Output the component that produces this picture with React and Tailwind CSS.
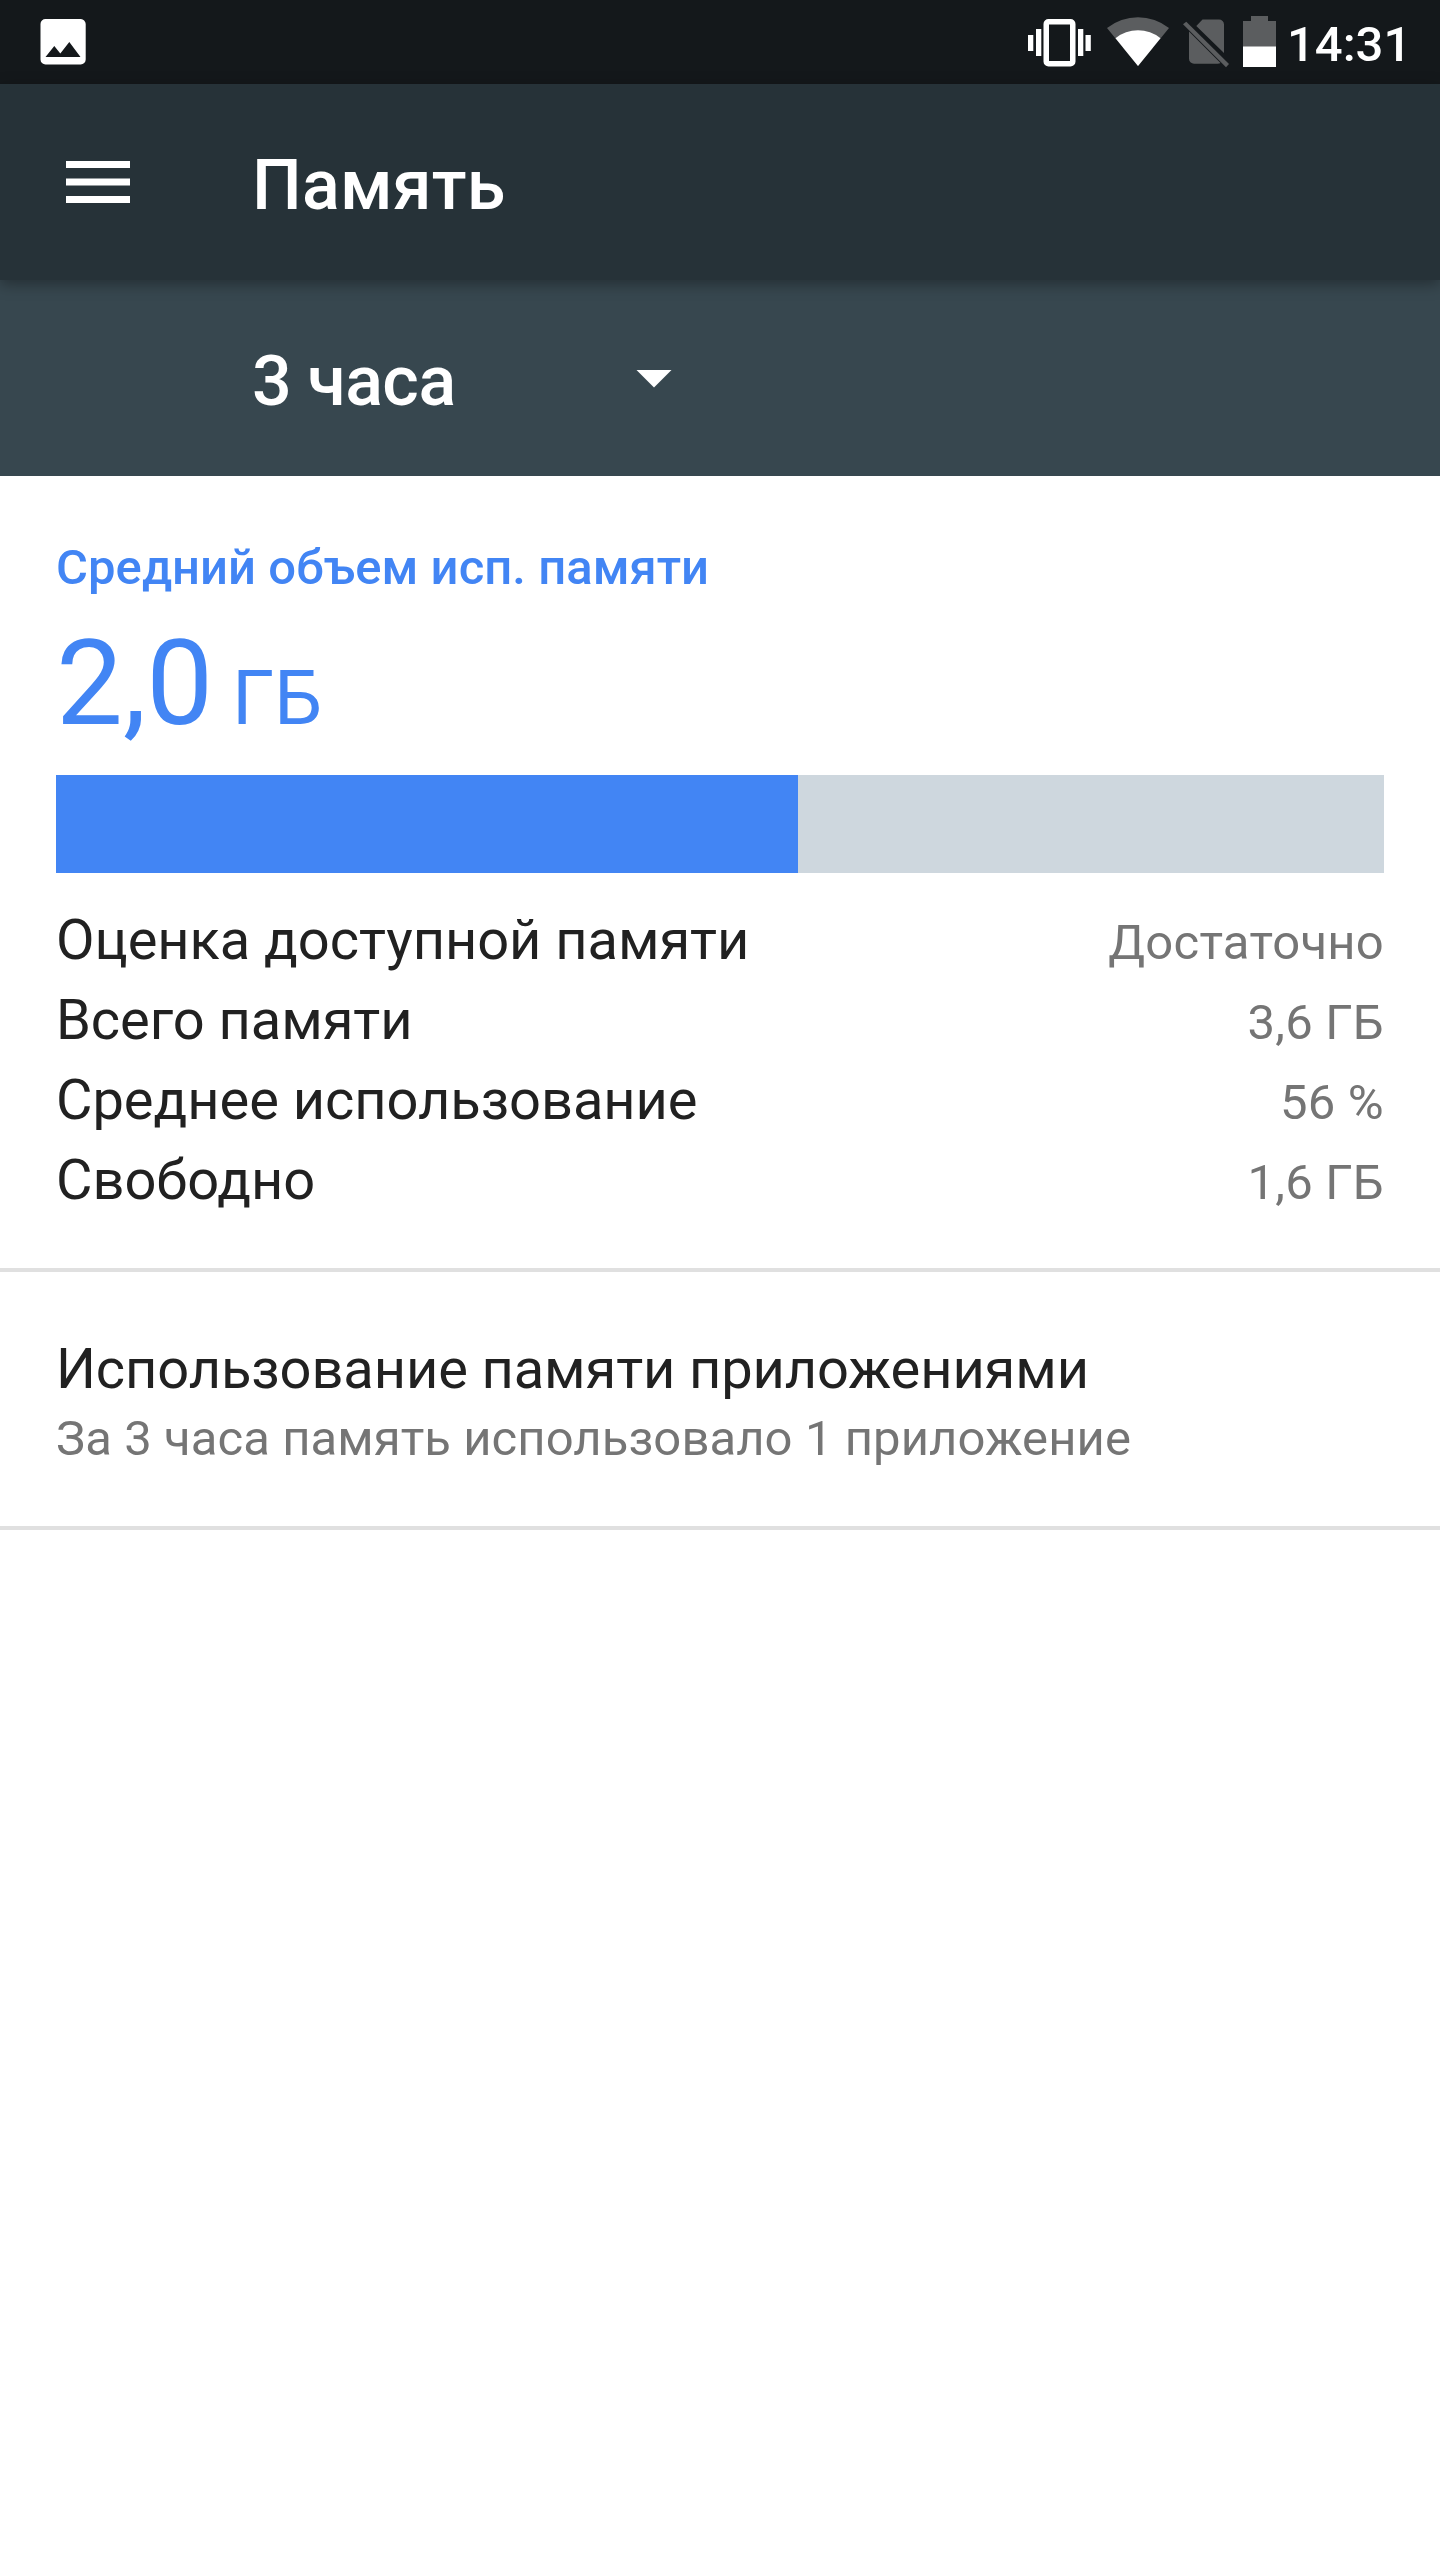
const stats = [
  ["Оценка доступной памяти", "Достаточно"],
  ["Всего памяти", "3,6 ГБ"],
  ["Среднее использование", "56 %"],
  ["Свободно", "1,6 ГБ"],
];

function StatusBar() {
  return (
    <div className="flex h-[84px] items-center bg-[#14181b] pl-10 text-white">
      <svg className="h-[46px] w-[46px]" viewBox="0 0 46 46" fill="currentColor">
        <path fillRule="evenodd" d="M5.5 0h35A5 5 0 0 1 45.7 5v35.500a5 5 0 0 1-5 5H5.500a5 5 0 0 1-5-5V5a5 5 0 0 1 5-5zM5.500 38h35L29.300 23l-9 11.500L14.300 27z" />
      </svg>
      <div className="ml-auto flex w-[412px] items-center">
        <svg className="h-[50px] w-[64px]" viewBox="1028 17 64 50" fill="currentColor">
          <path d="M1028 35h5.300v16h-5.300zM1036 29h5.300v27h-5.300zM1078 29h5.300v27h-5.300zM1085.500 35h5.300v16h-5.300z" />
          <path fillRule="evenodd" d="M1048.500 19h22a5 5 0 0 1 5 5v37.500a5 5 0 0 1-5 5h-22a5 5 0 0 1-5-5V24a5 5 0 0 1 5-5zM1049 24.500v36.500h21V24.500z" />
        </svg>
        <svg className="ml-[15px] h-[50px] w-[62px]" viewBox="1107 17 62 50" fill="currentColor">
          <path fill="#5b5d5f" d="M1138 66L1107 28a50 50 0 0 1 62 0z" />
          <path d="M1138 66L1115.500 38.200a36 36 0 0 1 45 0z" />
        </svg>
        <svg className="ml-[13px] mt-[2px] h-[52px] w-[48px]" viewBox="1182 17 48 52" fill="#5b5d5f">
          <path d="M1196.300 26l6.200-6.500h16.500a5 5 0 0 1 5 5v28.500zM1189 31.500l31.500 31.500q-1 .8-3 .8h-23.500a5 5 0 0 1-5-5z" />
          <path d="M1186.300 21.700l42.700 42.300-3 3.300-43-43z" />
        </svg>
        <svg className="-mt-px ml-[13px] h-[51px] w-[33px]" viewBox="0 0 33 51" fill="currentColor">
          <path fill="#5b5d5f" d="M8 0h17v5h8v26H0V5h8z" />
          <path d="M0 30.500h33V51H0z" />
        </svg>
        <span className="ml-[11px] mt-1 text-[49px] font-medium leading-none">14:31</span>
      </div>
    </div>
  );
}

export default function App() {
  return (
    <div className="flex h-[2560px] w-[1440px] flex-col bg-white font-['Roboto',sans-serif] text-[#212121]">
      <StatusBar />
      <header className="relative flex h-[196px] items-center bg-[#263238] text-white shadow-[0_4px_14px_rgba(0,0,0,0.35)]">
        <svg className="ml-[66px] h-[42px] w-16" viewBox="0 0 64 42" fill="currentColor">
          <path d="M0 0h64v7H0zM0 17.500h64v7H0zM0 35h64v7H0z" />
        </svg>
        <h1 className="ml-[122px] mt-[6px] text-[70px] font-medium leading-none tracking-[0.25px]">Память</h1>
      </header>
      <div className="flex h-[196px] items-center bg-[#37474f] pl-[252px] text-white">
        <span className="mt-[6px] w-[384px] text-[70px] font-medium leading-none tracking-[-0.5px] [word-spacing:-1px]">3 часа</span>
        <svg className="mt-[2px] h-[18px] w-9" viewBox="0 0 36 18" fill="currentColor">
          <path d="M0.500 0h35L18 17.500z" />
        </svg>
      </div>
      <main className="flex flex-col">
        <section className="flex flex-col border-b-4 border-[#e0e0e0] px-14 pb-12 pt-16">
          <h2 className="h-[56px] text-[49px] font-medium leading-[56px] tracking-[0.04px] text-[#4285f4]">Средний объем исп. памяти</h2>
          <p className="mt-[18px] h-[140px] whitespace-pre text-[119px] leading-[140px] text-[#4285f4]">2,0<span className="text-[76px]"> ГБ</span></p>
          <div className="mt-[21px] h-[98px] bg-[#ced7de]">
            <div className="h-full w-[742px] bg-[#4285f4]" />
          </div>
          <dl className="mt-[27px]">
            {stats.map(([label, value]) => (
              <div key={label} className="flex h-20 items-baseline justify-between leading-[80px]">
                <dt className="text-[56px] tracking-[-0.04px]">{label}</dt>
                <dd className="text-[49px] tracking-[0.25px] text-[#757575]">{value}</dd>
              </div>
            ))}
          </dl>
        </section>
        <section className="flex h-[258px] flex-col border-b-4 border-[#e0e0e0] px-14 pt-16">
          <h3 className="text-[56px] leading-[66px] tracking-[-0.1px]">Использование памяти приложениями</h3>
          <p className="mt-1 text-[49px] leading-[66px] tracking-[0.08px] text-[#757575]">За 3 часа память использовало 1 приложение</p>
        </section>
      </main>
    </div>
  );
}
